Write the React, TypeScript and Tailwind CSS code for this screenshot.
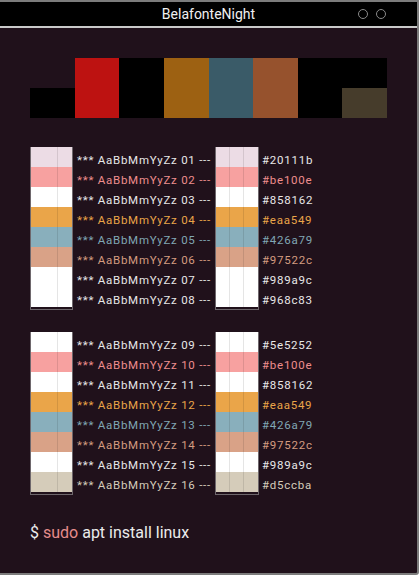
import React, { FC } from "react";

type Row = { num: string; swatch: string; text: string; hex: string };

const blockOne: Row[] = [
  { num: "01", swatch: "bg-[#ecdce5]", text: "text-[#e8e8e8]", hex: "#20111b" },
  { num: "02", swatch: "bg-[#f7a1a0]", text: "text-[#ee8e8e]", hex: "#be100e" },
  { num: "03", swatch: "bg-[#ffffff]", text: "text-[#e8e8e8]", hex: "#858162" },
  { num: "04", swatch: "bg-[#eaa549]", text: "text-[#eaa549]", hex: "#eaa549" },
  { num: "05", swatch: "bg-[#89afbc]", text: "text-[#80a7b4]", hex: "#426a79" },
  { num: "06", swatch: "bg-[#d9a287]", text: "text-[#d49c80]", hex: "#97522c" },
  { num: "07", swatch: "bg-[#ffffff]", text: "text-[#e8e8e8]", hex: "#989a9c" },
  { num: "08", swatch: "bg-[#ffffff]", text: "text-[#e8e8e8]", hex: "#968c83" },
];

const blockTwo: Row[] = [
  { num: "09", swatch: "bg-[#ffffff]", text: "text-[#e8e8e8]", hex: "#5e5252" },
  { num: "10", swatch: "bg-[#f7a1a0]", text: "text-[#ee8e8e]", hex: "#be100e" },
  { num: "11", swatch: "bg-[#ffffff]", text: "text-[#e8e8e8]", hex: "#858162" },
  { num: "12", swatch: "bg-[#eaa549]", text: "text-[#eaa549]", hex: "#eaa549" },
  { num: "13", swatch: "bg-[#89afbc]", text: "text-[#80a7b4]", hex: "#426a79" },
  { num: "14", swatch: "bg-[#d9a287]", text: "text-[#d49c80]", hex: "#97522c" },
  { num: "15", swatch: "bg-[#ffffff]", text: "text-[#e8e8e8]", hex: "#989a9c" },
  { num: "16", swatch: "bg-[#d5ccba]", text: "text-[#d5ccba]", hex: "#d5ccba" },
];

const Block: FC<{ rows: Row[] }> = ({ rows }) => {
  return (
    <div className="flex">
      <div className="border-x border-b border-[#6e676c]">
        {rows.map((r) => (
          <div key={r.num} className={`flex h-[20px] ${r.swatch}`}>
            <div className="w-[27px] border-r border-black/10" />
            <div className="w-[14px]" />
          </div>
        ))}
      </div>
      <div className="w-[142px] pl-[4px] pt-[3px] text-[11.5px] tracking-[0.75px] whitespace-pre">
        {rows.map((r) => (
          <div key={r.num} className={`h-[20px] leading-[20px] ${r.text}`}>
            {`*** AaBbMmYyZz ${r.num} ---`}
          </div>
        ))}
      </div>
      <div className="border-x border-b border-[#6e676c]">
        {rows.map((r) => (
          <div key={r.num} className={`flex h-[20px] ${r.swatch}`}>
            <div className="w-[14px] border-r border-black/10" />
            <div className="w-[14px] border-r border-black/10" />
            <div className="w-[14px]" />
          </div>
        ))}
      </div>
      <div className="pl-[3px] pt-[3px] text-[11.5px] tracking-[0.75px]">
        {rows.map((r) => (
          <div key={r.num} className={`h-[20px] leading-[20px] ${r.text}`}>
            {r.hex}
          </div>
        ))}
      </div>
    </div>
  );
};

const App: FC = () => {
  return (
    <div
      className="w-[419px] h-[575px] flex flex-col bg-[#20111b] border-t-2 border-r-2 border-b-2 border-[#7c7c7c] rounded-br-[3px] overflow-hidden"
      style={{ fontFamily: "Roboto, 'Noto Sans', sans-serif" }}
    >
      {/* title bar */}
      <div className="grid grid-cols-[1fr_auto_1fr] items-center h-[26px] bg-black border-b-2 border-[#c9c9c9]">
        <div />
        <span className="text-[14px] leading-[24px] text-[#f0f0f0]">BelafonteNight</span>
        <div className="flex justify-end gap-[8px] pr-[31px]">
          <span className="w-[10px] h-[10px] rounded-full border border-[#8a8a8a]" />
          <span className="w-[10px] h-[10px] rounded-full border border-[#8a8a8a]" />
        </div>
      </div>

      <div className="pl-[30px] pt-[30px]">
        {/* colour bars */}
        <div className="grid grid-cols-8 w-[357px] h-[60px]">
          <div className="flex flex-col justify-end">
            <div className="h-[30px] bg-black" />
          </div>
          <div className="bg-[#bd1211]" />
          <div className="bg-black" />
          <div className="bg-[#9d6112]" />
          <div className="bg-[#3a5b68]" />
          <div className="bg-[#96522d]" />
          <div className="bg-black" />
          <div className="flex flex-col">
            <div className="h-[30px] bg-black" />
            <div className="h-[30px] bg-[#463c2b]" />
          </div>
        </div>

        <div className="mt-[29px]">
          <Block rows={blockOne} />
        </div>
        <div className="mt-[22px]">
          <Block rows={blockTwo} />
        </div>

        <div className="mt-[27px] text-[16px] leading-[22px] text-[#ececec]">
          $ <span className="text-[#e68c8c]">sudo</span> apt install linux
        </div>
      </div>
    </div>
  );
};

export default App;
